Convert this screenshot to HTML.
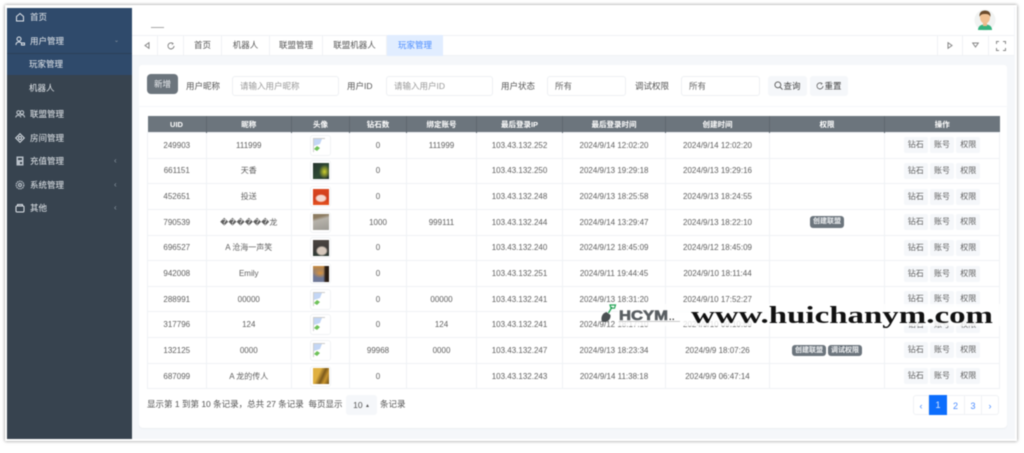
<!DOCTYPE html>
<html lang="zh"><head><meta charset="utf-8"><title>玩家管理</title>
<style>
*{box-sizing:border-box}
html,body{margin:0;padding:0;width:1024px;height:453px;overflow:hidden;background:#fff}
body{font-family:"Liberation Sans","Noto Sans CJK SC",sans-serif;color:#666;font-size:8px}
#root{position:absolute;left:0;top:0;width:1024px;height:453px;filter:blur(.55px)}
.a{position:absolute;white-space:nowrap}
#frame{left:5px;top:5px;width:1012px;height:436px;background:#f5f7fa;box-shadow:0 0 3px rgba(0,0,0,.5);border:2px solid #fff}
#side{left:7px;top:8px;width:125px;height:431px;background:#37434f}
.m{position:absolute;left:0;width:125px;color:#e6eaee;font-size:8.500px;height:24px;line-height:24px}
.m span{position:absolute;left:23px}
.m svg{position:absolute;left:8px;top:7px}
.m i{position:absolute;left:107px;top:0;font-style:normal;font-size:8px;color:#8b97a3}
.tab{position:absolute;top:35px;height:21px;line-height:21px;text-align:center;font-size:8.500px;color:#555;border-right:1px solid #f0f2f5}
.lab{position:absolute;font-size:8.500px;top:81px;line-height:11px;color:#555}
.inp{position:absolute;top:76px;height:20px;background:#fff;border:1px solid #eef0f3;border-radius:3px;line-height:18px;padding-left:7px;font-size:8.500px;color:#666}
.btn{position:absolute;top:76px;height:20px;background:#f5f7fa;border-radius:3px;line-height:20px;text-align:center;font-size:8.500px;color:#444}
table{position:absolute;left:147px;top:116px;width:852px;border-collapse:collapse;table-layout:fixed}
th{background:#6c757d;color:#fff;height:16.500px;padding:0;font-size:7.500px;font-weight:bold;border-right:1px solid #5f6870;text-align:center}
td{height:25.650px;padding:0;text-align:center;border:1px solid #eff2f5;font-size:8px;color:#5f5f5f;position:relative}
.th{display:inline-block;width:21px;height:21px;border:1px solid #f1f3f5;border-radius:3px;vertical-align:middle;padding:2px;background:#fff}
.th b{display:block;width:16px;height:16px;margin:-.5px}
.br{display:block;width:15px;height:15px}
.ops{display:inline-block;background:#f5f7fa;width:24px;height:16px;line-height:16px;border-radius:2px;margin:0 1.150px;color:#5f5f5f;font-size:8px;vertical-align:middle}
.bd{display:inline-block;background:#6c757d;color:#eef0f2;height:11.500px;line-height:11.500px;border-radius:3px;font-size:7px;padding:0 3px;margin:0 1px;font-weight:bold;vertical-align:middle}
.pg{position:absolute;top:395px;height:20px;line-height:20px;text-align:center;color:#4c8dff;font-size:9px;background:#fff;border:1px solid #f0f2f5;border-left:0}
</style></head><body>
<div id="root">
<div class="a" id="frame"></div>

<!-- header -->
<div class="a" style="left:7px;top:7px;width:1007px;height:28px;background:#fff"></div>
<div class="a" style="left:151px;top:26.500px;width:13px;height:1.500px;background:#a8a8a8"></div>
<svg class="a" style="left:974px;top:9px" width="22" height="22" viewBox="0 0 22 22">
<circle cx="11" cy="11" r="10.500" fill="#f1f3f2"/>
<path d="M4 21c0-4 3-5.500 7-5.500s7 1.500 7 5.500z" fill="#36b37e"/>
<rect x="9" y="12" width="4" height="5" fill="#eeb98a"/>
<ellipse cx="11" cy="8.500" rx="5" ry="6" fill="#f1c193"/>
<path d="M5.500 8C5 3 8 1.500 11 1.500S17 3 16.500 8C15.500 5.500 14 5 11 5S6.500 5.500 5.500 8z" fill="#6b4a2b"/>
</svg>

<!-- tab bar -->
<div class="a" style="left:132px;top:35px;width:882px;height:21px;background:#fff;border-top:1px solid #f0f2f5;border-bottom:1px solid #f0f2f5"></div>
<div class="tab" style="left:136px;width:22px"><svg width="6" height="7" viewBox="0 0 6 7" style="vertical-align:-.5px"><path d="M5 .7 1 3.500 5 6.300z" fill="none" stroke="#888"/></svg></div>
<div class="tab" style="left:158px;width:26px"><svg width="8" height="8" viewBox="0 0 10 10" style="vertical-align:middle"><path d="M7.500 2A3.800 3.800 0 1 0 8.800 5" fill="none" stroke="#666" stroke-width="1"/><path d="M5.500 .8 7.800 2 6 3.500" fill="none" stroke="#666" stroke-width=".7"/></svg></div>
<div class="tab" style="left:184px;width:38px">首页</div>
<div class="tab" style="left:222px;width:48px">机器人</div>
<div class="tab" style="left:270px;width:53px">联盟管理</div>
<div class="tab" style="left:323px;width:64px">联盟机器人</div>
<div class="tab" style="left:387px;width:56px;background:#e1edff;color:#4c8dff;border:0">玩家管理</div>
<div class="tab" style="left:937px;width:26px;border-left:1px solid #f0f2f5"><svg width="6" height="7" viewBox="0 0 6 7" style="vertical-align:-.5px"><path d="M1 .7 5 3.500 1 6.300z" fill="none" stroke="#888"/></svg></div>
<div class="tab" style="left:963px;width:26px"><svg width="7" height="6" viewBox="0 0 7 6" style="vertical-align:0"><path d="M.7 1h5.600L3.500 5z" fill="none" stroke="#888"/></svg></div>
<svg class="a" style="left:996px;top:41px" width="10" height="10" viewBox="0 0 10 10" fill="none" stroke="#888" stroke-width="1"><path d="M.5 3V.5H3M7 .5h2.500V3M9.500 7v2.500H7M3 9.500H.5V7"/></svg>

<!-- filter card -->
<div class="a" style="left:139px;top:65px;width:868px;height:41px;background:#fff;border-radius:3px 3px 0 0"></div>
<div class="a" style="left:139px;top:107px;width:868px;height:321px;background:#fff;border-radius:0 0 4px 4px;box-shadow:0 1px 1px #eceef1"></div>
<div class="btn" style="left:147px;top:74px;width:31px;background:#6c757d;color:#e9ecef;border-radius:4px">新增</div>
<div class="lab" style="left:186px">用户昵称</div>
<div class="inp" style="left:232px;width:107px;color:#999">请输入用户昵称</div>
<div class="lab" style="left:347px">用户ID</div>
<div class="inp" style="left:386px;width:107px;color:#999">请输入用户ID</div>
<div class="lab" style="left:501px">用户状态</div>
<div class="inp" style="left:547px;width:79px">所有</div>
<div class="lab" style="left:635px">调试权限</div>
<div class="inp" style="left:681px;width:79px">所有</div>
<div class="btn" style="left:768px;width:39px"><svg width="9" height="9" viewBox="0 0 10 10" style="vertical-align:-1px"><circle cx="4.300" cy="4.300" r="3.300" fill="none" stroke="#555"/><path d="M6.800 6.800 9.500 9.500" stroke="#555"/></svg>查询</div>
<div class="btn" style="left:810px;width:38px"><svg width="8" height="8" viewBox="0 0 10 10" style="vertical-align:-1px"><path d="M7.500 2A3.800 3.800 0 1 0 8.800 5" fill="none" stroke="#555" stroke-width="1"/><path d="M5.500 .8 7.800 2 6 3.500" fill="none" stroke="#555" stroke-width=".7"/></svg>重置</div>

<!-- table -->
<table>
<colgroup><col style="width:58.500px"><col style="width:85.500px"><col style="width:58px"><col style="width:57px"><col style="width:70px"><col style="width:86px"><col style="width:103px"><col style="width:104px"><col style="width:115px"><col style="width:115px"></colgroup>
<tr><th>UID</th><th>昵称</th><th>头像</th><th>钻石数</th><th>绑定账号</th><th>最后登录IP</th><th>最后登录时间</th><th>创建时间</th><th>权限</th><th style="border-right:0">操作</th></tr>
<tr><td>249903</td><td>111999</td><td><span class="th"><svg class="br" viewBox="0 0 15 15"><path d="M0 0h12v1H1v13H0z" fill="#ccc"/><path d="M1 1h8l-2 5-6 2z" fill="#c3d6f5"/><path d="M1 11l3-3 3 2-3 3z" fill="#6fc25a"/></svg></span></td><td>0</td><td>111999</td><td>103.43.132.252</td><td>2024/9/14 12:02:20</td><td>2024/9/14 12:02:20</td><td></td><td><span class="ops">钻石</span><span class="ops">账号</span><span class="ops">权限</span></td></tr>
<tr><td>661151</td><td>天香</td><td><span class="th"><b style="background:radial-gradient(ellipse 35% 45% at 72% 55%,#cfd02c,transparent),linear-gradient(135deg,#26332e,#2e4a33 55%,#1f2b2a)"></b></span></td><td>0</td><td></td><td>103.43.132.250</td><td>2024/9/13 19:29:18</td><td>2024/9/13 19:29:16</td><td></td><td><span class="ops">钻石</span><span class="ops">账号</span><span class="ops">权限</span></td></tr>
<tr><td>452651</td><td>投送</td><td><span class="th"><b style="background:radial-gradient(ellipse 38% 26% at 50% 58%,#f5d8cf 70%,transparent),linear-gradient(#d9451f,#cf3d1c 60%,#e6521f)"></b></span></td><td>0</td><td></td><td>103.43.132.248</td><td>2024/9/13 18:25:58</td><td>2024/9/13 18:24:55</td><td></td><td><span class="ops">钻石</span><span class="ops">账号</span><span class="ops">权限</span></td></tr>
<tr><td>790539</td><td>������龙</td><td><span class="th"><b style="background:linear-gradient(165deg,#8d7c62 0 22%,#b6b2aa 38%,#9c9a94)"></b></span></td><td>1000</td><td>999111</td><td>103.43.132.244</td><td>2024/9/14 13:29:47</td><td>2024/9/13 18:22:10</td><td><span class="bd">创建联盟</span></td><td><span class="ops">钻石</span><span class="ops">账号</span><span class="ops">权限</span></td></tr>
<tr><td>696527</td><td>A 沧海一声笑</td><td><span class="th"><b style="background:radial-gradient(ellipse 38% 32% at 55% 68%,#d6c8bc 70%,transparent),linear-gradient(#4a4440,#3d3a38 60%,#2c3a33)"></b></span></td><td>0</td><td></td><td>103.43.132.240</td><td>2024/9/12 18:45:09</td><td>2024/9/12 18:45:09</td><td></td><td><span class="ops">钻石</span><span class="ops">账号</span><span class="ops">权限</span></td></tr>
<tr><td>942008</td><td>Emily</td><td><span class="th"><b style="background:linear-gradient(90deg,transparent 65%,#2a1d14 78%),radial-gradient(ellipse 50% 30% at 45% 45%,#d9923a,transparent),linear-gradient(#c98a3a,#6f7896 55%,#6f7896)"></b></span></td><td>0</td><td></td><td>103.43.132.251</td><td>2024/9/11 19:44:45</td><td>2024/9/10 18:11:44</td><td></td><td><span class="ops">钻石</span><span class="ops">账号</span><span class="ops">权限</span></td></tr>
<tr><td>288991</td><td>00000</td><td><span class="th"><svg class="br" viewBox="0 0 15 15"><path d="M0 0h12v1H1v13H0z" fill="#ccc"/><path d="M1 1h8l-2 5-6 2z" fill="#c3d6f5"/><path d="M1 11l3-3 3 2-3 3z" fill="#6fc25a"/></svg></span></td><td>0</td><td>00000</td><td>103.43.132.241</td><td>2024/9/13 18:31:20</td><td>2024/9/10 17:52:27</td><td></td><td><span class="ops">钻石</span><span class="ops">账号</span><span class="ops">权限</span></td></tr>
<tr><td>317796</td><td>124</td><td><span class="th"><svg class="br" viewBox="0 0 15 15"><path d="M0 0h12v1H1v13H0z" fill="#ccc"/><path d="M1 1h8l-2 5-6 2z" fill="#c3d6f5"/><path d="M1 11l3-3 3 2-3 3z" fill="#6fc25a"/></svg></span></td><td>0</td><td>124</td><td>103.43.132.241</td><td>2024/9/12 18:17:10</td><td>2024/9/10 09:10:59</td><td></td><td><span class="ops">钻石</span><span class="ops">账号</span><span class="ops">权限</span></td></tr>
<tr><td>132125</td><td>0000</td><td><span class="th"><svg class="br" viewBox="0 0 15 15"><path d="M0 0h12v1H1v13H0z" fill="#ccc"/><path d="M1 1h8l-2 5-6 2z" fill="#c3d6f5"/><path d="M1 11l3-3 3 2-3 3z" fill="#6fc25a"/></svg></span></td><td>99968</td><td>0000</td><td>103.43.132.247</td><td>2024/9/13 18:23:34</td><td>2024/9/9 18:07:26</td><td><span class="bd">创建联盟</span><span class="bd">调试权限</span></td><td><span class="ops">钻石</span><span class="ops">账号</span><span class="ops">权限</span></td></tr>
<tr><td>687099</td><td>A 龙的传人</td><td><span class="th"><b style="background:linear-gradient(115deg,#e0b040 0 35%,#7c5a1c 58%,#c9962f 75%,#6b4d18)"></b></span></td><td>0</td><td></td><td>103.43.132.243</td><td>2024/9/14 11:38:18</td><td>2024/9/9 06:47:14</td><td></td><td><span class="ops">钻石</span><span class="ops">账号</span><span class="ops">权限</span></td></tr>
</table>

<!-- footer -->
<div class="a" style="left:147px;top:399px;font-size:8.500px;line-height:11px;color:#555">显示第 1 到第 10 条记录，总共 27 条记录&nbsp; 每页显示</div>
<div class="a" style="left:346px;top:395px;width:31px;height:20px;background:#f5f7fa;border-radius:3px;line-height:20px;text-align:center;font-size:8.500px;color:#555">10 <span style="font-size:5px;vertical-align:1px">▲</span></div>
<div class="a" style="left:380px;top:399px;font-size:8.500px;line-height:11px;color:#555">条记录</div>
<div class="pg" style="left:913px;width:16px;border-left:1px solid #f0f2f5;border-radius:3px 0 0 3px">‹</div>
<div class="pg" style="left:929px;width:18px;background:#0d6efd;color:#dbe9ff;border:0">1</div>
<div class="pg" style="left:947px;width:18px">2</div>
<div class="pg" style="left:965px;width:17px">3</div>
<div class="pg" style="left:982px;width:17px;border-radius:0 3px 3px 0">›</div>

<!-- sidebar -->
<div class="a" id="side">
<div style="position:absolute;left:0;top:0;width:125px;height:45px;background:#2f4a6b"></div>
<div style="position:absolute;left:0;top:45px;width:125px;height:22px;background:#2f4a6b;border-top:1px solid #2b3f58"></div>
<div class="m" style="top:-3px"><svg width="10" height="10" viewBox="0 0 10 10" fill="none" stroke="#dfe4ea"><path d="M1.500 4.500 5 1.500l3.500 3V9h-7z"/></svg><span>首页</span></div>
<div class="m" style="top:21px"><svg width="10" height="10" viewBox="0 0 10 10" fill="none" stroke="#dfe4ea"><circle cx="4" cy="3" r="2"/><path d="M1 9c0-2 1-3 3-3s2 1 2 1M6.500 7h3v2h-3z"/></svg><span>用户管理</span><i style="font-size:6px">⌄</i></div>
<div class="m" style="top:44px"><span style="left:22px">玩家管理</span></div>
<div class="m" style="top:68px"><span style="left:22px">机器人</span></div>
<div class="m" style="top:94px"><svg width="10" height="10" viewBox="0 0 10 10" fill="none" stroke="#c5ccd3"><circle cx="3.500" cy="3.500" r="1.700"/><circle cx="7" cy="3.500" r="1.700"/><path d="M.8 8.500c0-3 5-3 5 0M5.500 6c2-.8 4 0 4 2.500"/></svg><span>联盟管理</span></div>
<div class="m" style="top:118px"><svg width="10" height="10" viewBox="0 0 10 10" fill="none" stroke="#dfe4ea"><path d="M5 .7 9.300 5 5 9.300.7 5z"/><circle cx="5" cy="5" r="1.500"/></svg><span>房间管理</span></div>
<div class="m" style="top:141px"><svg width="10" height="10" viewBox="0 0 10 10"><path d="M1.500 .5h7v9h-7z" fill="#b9c1c9"/><path d="M3 2h4v2H3zM5 6h2v2H5z" fill="#37434f"/></svg><span>充值管理</span><i>‹</i></div>
<div class="m" style="top:165px"><svg width="10" height="10" viewBox="0 0 10 10" fill="none" stroke="#b9c1c9" stroke-width="1.200"><circle cx="5" cy="5" r="3.800" stroke-dasharray="1.500 .6"/><circle cx="5" cy="5" r="1.500"/></svg><span>系统管理</span><i>‹</i></div>
<div class="m" style="top:188px"><svg width="10" height="10" viewBox="0 0 10 10" fill="none" stroke="#dfe4ea"><rect x="1" y="3" width="8" height="6" rx="1"/><path d="M2.500 3V1.500h5V3"/></svg><span>其他</span><i>‹</i></div>
</div>

<!-- watermark -->
<div class="a" style="left:618px;top:304px;width:382px;height:22px;background:rgba(255,255,255,.82)"></div>
<svg class="a" style="left:598px;top:300px" width="410" height="30" viewBox="0 0 410 30">
<path d="M3.500 20c-.5-4 1.500-7 5-8l4 3c.5 4-2.500 7-6 7-1.500 0-2.700-.7-3-2z" fill="#4a4f52"/>
<path d="M10.500 13 14 7" stroke="#23a455" stroke-width="1.300"/><path d="M12 5h5.500l-1 3.200h-3.500z" fill="none" stroke="#23a455" stroke-width="1.200"/>
<text x="21" y="20" font-family="Liberation Sans" font-weight="bold" font-size="13.500" fill="#5a5f63" stroke="#5a5f63" stroke-width=".6" textLength="49" lengthAdjust="spacingAndGlyphs">HCYM</text>
<text x="71" y="20" font-family="Liberation Sans" font-weight="bold" font-size="9" fill="#333" letter-spacing=".5">..</text>
<rect x="21" y="21" width="61" height=".8" fill="#bbb"/>
<text x="93" y="23" font-family="Liberation Serif" font-weight="bold" font-size="24" fill="#111" textLength="302" lengthAdjust="spacingAndGlyphs">www.huichanym.com</text>
</svg>
</div>
</body></html>
